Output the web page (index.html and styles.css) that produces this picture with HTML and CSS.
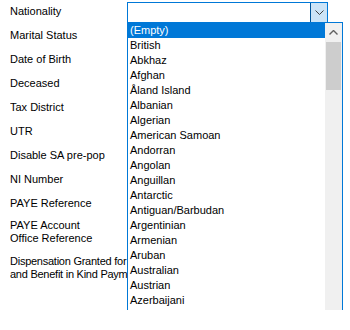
FILE: index.html
```html
<!DOCTYPE html>
<html lang="en">
<head>
    <meta charset="UTF-8">
    <title>Personal Details</title>
    <link rel="stylesheet" href="styles.css">
</head>
<body>
    <div class="form">
        <div class="row">
            <div class="label">Nationality</div>
            <div class="combo">
                <div class="combo-text"></div>
                <div class="combo-button">
                    <svg width="9" height="5" viewBox="0 0 9 5"><polyline points="0.5,0.5 4.5,4.5 8.5,0.5" fill="none" stroke="#404040" stroke-width="1"/></svg>
                </div>
            </div>
        </div>
        <div class="row"><div class="label">Marital Status</div></div>
        <div class="row"><div class="label">Date of Birth</div></div>
        <div class="row"><div class="label">Deceased</div></div>
        <div class="row"><div class="label">Tax District</div></div>
        <div class="row"><div class="label">UTR</div></div>
        <div class="row"><div class="label">Disable SA pre-pop</div></div>
        <div class="row"><div class="label">NI Number</div></div>
        <div class="row"><div class="label">PAYE Reference</div></div>
        <div class="row tall">
            <div class="label multi">PAYE Account<br>Office Reference</div>
        </div>
        <div class="row tall">
            <div class="label multi narrow">Dispensation Granted for<br>and Benefit in Kind Paym</div>
        </div>
    </div>

    <div class="dropdown">
        <ul class="items">
            <li class="selected">(Empty)</li>
            <li>British</li>
            <li>Abkhaz</li>
            <li>Afghan</li>
            <li>Åland Island</li>
            <li>Albanian</li>
            <li>Algerian</li>
            <li>American Samoan</li>
            <li>Andorran</li>
            <li>Angolan</li>
            <li>Anguillan</li>
            <li>Antarctic</li>
            <li>Antiguan/Barbudan</li>
            <li>Argentinian</li>
            <li>Armenian</li>
            <li>Aruban</li>
            <li>Australian</li>
            <li>Austrian</li>
            <li>Azerbaijani</li>
        </ul>
        <div class="scrollbar">
            <div class="scroll-up">
                <svg width="9" height="5" viewBox="0 0 9 5"><polyline points="0.5,4.5 4.5,0.5 8.5,4.5" fill="none" stroke="#606060" stroke-width="1.4"/></svg>
            </div>
            <div class="thumb"></div>
        </div>
    </div>
</body>
</html>
```

FILE: styles.css
```css
body {
    margin: 0;
    background-color: #fff;
    font-family: "Liberation Sans", Arial, sans-serif;
    font-size: 11px;
    color: #000;
}
.form {
    padding-left: 10px;
}
.row {
    display: flex;
    height: 24px;
}
.row.tall {
    height: 36px;
}
.label {
    width: 117px;
    line-height: 22px;
    white-space: nowrap;
    overflow: hidden;
}
.label.multi {
    line-height: 13px;
    padding-top: 3px;
}
.label.narrow {
    letter-spacing: -0.25px;
}
.combo {
    display: flex;
    margin-top: 2px;
    width: 199px;
    height: 19px;
    border: 1px solid #0078d7;
    background-color: #fff;
}
.combo-text {
    flex: 1;
}
.combo-button {
    width: 16px;
    display: flex;
    align-items: center;
    justify-content: center;
    background-color: #cce4f7;
    border-left: 1px solid #005499;
}
.dropdown {
    position: absolute;
    left: 127px;
    top: 22px;
    width: 214px;
    height: 287px;
    display: flex;
    border: 1px solid #0078d7;
    border-bottom: none;
    background-color: #fff;
    overflow: hidden;
}
.items {
    flex: 1;
    margin: 0;
    padding: 0;
    list-style: none;
}
.items li {
    height: 15px;
    line-height: 15px;
    padding-left: 2px;
    white-space: nowrap;
}
.items .selected {
    background-color: #0078d7;
    color: #fff;
}
.scrollbar {
    width: 17px;
    background-color: #f0f0f0;
}
.scroll-up {
    height: 19px;
    display: flex;
    align-items: center;
    justify-content: center;
}
.thumb {
    margin: 0 1px;
    height: 48px;
    background-color: #cdcdcd;
}
```
